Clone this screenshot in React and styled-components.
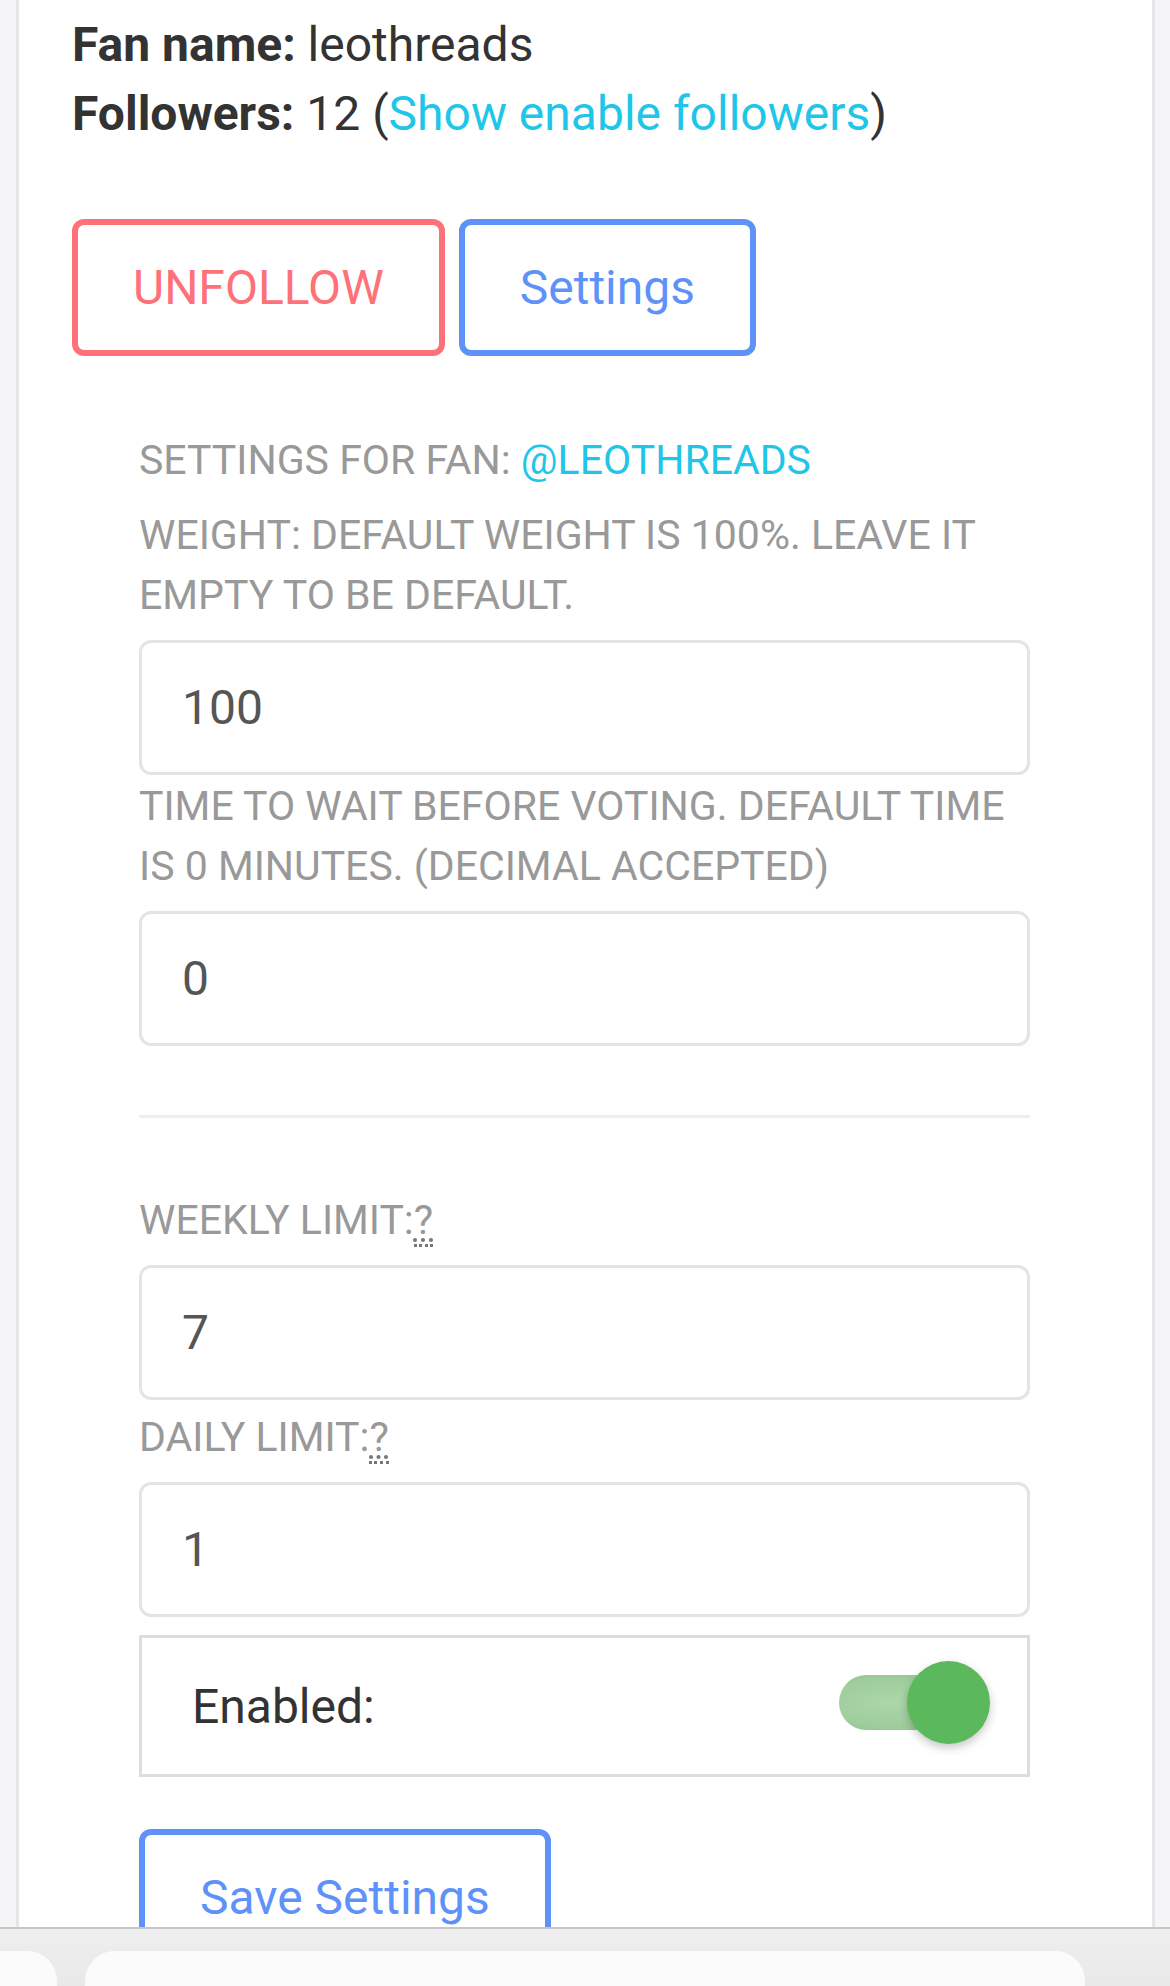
import React, { useState } from 'react';
import styled, { createGlobalStyle } from 'styled-components';

const GlobalStyle = createGlobalStyle`
  html, body {
    margin: 0;
    padding: 0;
    background: #f5f5f7;
  }
  body {
    font-family: Roboto, "Liberation Sans", Arial, sans-serif;
    color: #333;
  }
  * { box-sizing: border-box; }
`;

const Page = styled.div`
  padding: 0 15px 0 16px;
  min-height: 1986px;
`;

const Card = styled.div`
  background: #fff;
  border-left: 3px solid #e6e6e8;
  border-right: 3px solid #e6e6e8;
  padding: 11px 54px 200px 53px;
  min-height: 1986px;
`;

const InfoLine = styled.div`
  font-size: 48px;
  line-height: 68.57px;
  color: #333;

  b { font-weight: 700; }
`;

const Link = styled.a`
  color: #1fc6e8;
  text-decoration: none;
`;

const ButtonRow = styled.div`
  display: flex;
  gap: 14px;
  margin-top: 71px;
`;

const OutlineButton = styled.button`
  font-family: inherit;
  font-size: 48px;
  line-height: 69px;
  padding: 28px 55px;
  background: #fff;
  border: 6px solid ${p => p.$color};
  color: ${p => p.$color};
  border-radius: 12px;
  cursor: pointer;
`;

const Panel = styled.div`
  margin: 74px 68px 0 67px;
`;

const Label = styled.div`
  font-size: 41px;
  line-height: 60px;
  color: #999;
  text-transform: uppercase;
  margin-bottom: 15px;
`;

const Hint = styled.abbr`
  cursor: help;
  text-decoration: underline dotted #777;
  text-underline-offset: 4px;
  border-bottom: 3px dotted #777;
`;

const Input = styled.input`
  display: block;
  width: 100%;
  height: 135px;
  border: 3px solid #e4e4e4;
  border-radius: 12px;
  padding: 0 40px;
  font-family: inherit;
  font-size: 48px;
  color: #555;
  background: #fff;
  outline: none;
  margin-bottom: ${p => p.$gap || 1}px;
`;

const Divider = styled.hr`
  border: 0;
  border-top: 3px solid #eee;
  margin: 69px 0 72px;
`;

const SwitchBox = styled.div`
  display: flex;
  align-items: center;
  justify-content: space-between;
  height: 142px;
  margin-top: 18px;
  border: 3px solid #ddd;
  padding: 0 37px 0 50px;
  font-size: 48px;
  color: #333;
`;

const Switch = styled.div`
  position: relative;
  width: 151px;
  height: 83px;
  margin-bottom: 8px;
  cursor: pointer;
`;

const Track = styled.div`
  position: absolute;
  left: 0;
  top: 14px;
  width: 136px;
  height: 55px;
  border-radius: 28px;
  background: ${p => p.$on
    ? 'radial-gradient(ellipse at 40% 50%, #acd7aa 0%, #9fcd9c 60%, #8fbf8d 100%)'
    : '#ccc'};
`;

const Knob = styled.div`
  position: absolute;
  top: 0;
  left: ${p => (p.$on ? '68px' : '0')};
  width: 83px;
  height: 83px;
  border-radius: 50%;
  background: ${p => (p.$on ? '#5cb85c' : '#f1f1f1')};
  box-shadow: 0 4px 10px rgba(0, 0, 0, 0.22);
`;

const SaveRow = styled.div`
  margin-top: 52px;
`;

const BottomBar = styled.div`
  position: fixed;
  left: 0;
  right: 0;
  bottom: 0;
  height: 59px;
  background: linear-gradient(#eeeeee, #e9e9e9);
  border-top: 2px solid #c6c6c6;
  display: flex;
  align-items: flex-end;
  gap: 28px;
`;

const Tab = styled.div`
  height: 35px;
  width: ${p => p.$w}px;
  background: #fbfbfb;
  border-radius: ${p => (p.$first ? '0 30px 0 0' : '30px 30px 0 0')};
`;

export default function App() {
  const [enabled, setEnabled] = useState(true);
  const [form, setForm] = useState({ weight: '100', wait: '0', weekly: '7', daily: '1' });

  const change = e => setForm({ ...form, [e.target.name]: e.target.value });

  return (
    <Page>
      <GlobalStyle />
      <Card>
        <InfoLine><b>Fan name:</b> leothreads</InfoLine>
        <InfoLine>
          <b>Followers:</b> 12 (<Link href="#">Show enable followers</Link>)
        </InfoLine>

        <ButtonRow>
          <OutlineButton $color="#fe7179">UNFOLLOW</OutlineButton>
          <OutlineButton $color="#5f92f9">Settings</OutlineButton>
        </ButtonRow>

        <Panel>
          <Label>Settings for fan: <Link href="#">@leothreads</Link></Label>
          <Label>Weight: Default weight is 100%. Leave it empty to be default.</Label>
          <Input name="weight" value={form.weight} onChange={change} />
          <Label>Time to wait before voting. Default time is 0 minutes. (Decimal accepted)</Label>
          <Input name="wait" value={form.wait} onChange={change} />

          <Divider />

          <Label>Weekly limit:<Hint title="Max votes per week">?</Hint></Label>
          <Input name="weekly" value={form.weekly} onChange={change} $gap={7} />
          <Label>Daily limit:<Hint title="Max votes per day">?</Hint></Label>
          <Input name="daily" value={form.daily} onChange={change} />

          <SwitchBox>
            <span>Enabled:</span>
            <Switch onClick={() => setEnabled(!enabled)}>
              <Track $on={enabled} />
              <Knob $on={enabled} />
            </Switch>
          </SwitchBox>

          <SaveRow>
            <OutlineButton $color="#5f92f9">Save Settings</OutlineButton>
          </SaveRow>
        </Panel>
      </Card>
      <BottomBar>
        <Tab $first $w={57} />
        <Tab $w={1000} />
      </BottomBar>
    </Page>
  );
}
